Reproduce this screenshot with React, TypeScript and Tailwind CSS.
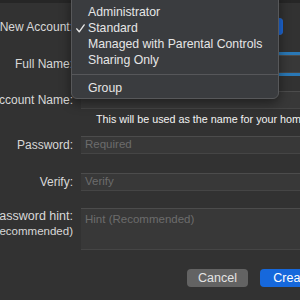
import React from 'react'

const font = { fontFamily: '"Liberation Sans", Arial, sans-serif' }

function Label({ children }: { children: React.ReactNode }) {
  return (
    <div className="flex w-[73px] flex-none justify-end whitespace-nowrap text-[12px] text-[#d8d8d8]">
      {children}
    </div>
  )
}

function Field({ placeholder, focused }: { placeholder?: string; focused?: boolean }) {
  return (
    <div
      className={
        'ml-[8px] flex h-[18px] w-[260px] flex-none items-center border-t border-[#4c4c4c] border-b-[#454545] border-b bg-[#383838] pl-[4px] text-[#6c6c6c] ' +
        (focused ? 'shadow-[0_0_0_3px_#2a78b6]' : '')
      }
    >
      {placeholder}
    </div>
  )
}

function Menu() {
  const items = ['Administrator', 'Standard', 'Managed with Parental Controls', 'Sharing Only']
  return (
    <div className="absolute left-[71px] top-[-8px] w-[208px] rounded-[6px] border border-[#57585a] bg-[#3a3c3f] pb-[2px] pt-[11px] text-[12.25px] text-[#e6e6e6] shadow-[0_4px_12px_rgba(0,0,0,0.45)]">
      {items.map((t) => (
        <div key={t} className="flex h-[16px] items-center">
          <span className="flex w-[16px] flex-none justify-end pr-[1px]">
            {t === 'Standard' && (
              <svg width="9" height="9" viewBox="0 0 9 9" className="mr-[2px]">
                <path d="M0.8 4.9 L3.2 7.8 L8.2 0.9" fill="none" stroke="#e6e6e6" strokeWidth="1.4" strokeLinecap="round" strokeLinejoin="round" />
              </svg>
            )}
          </span>
          <span className="whitespace-nowrap">{t}</span>
        </div>
      ))}
      <div className="flex h-[12px] items-center">
        <div className="h-px w-full bg-[#56575a]" />
      </div>
      <div className="flex h-[16px] items-center pl-[16px]">Group</div>
    </div>
  )
}

export default function App() {
  return (
    <div className="relative h-[300px] w-[300px] overflow-hidden bg-[#323232] text-[11.5px]" style={font}>
      <div className="h-[3px] bg-[#262626]" />
      <div className="flex flex-col">
        <div className="mt-[15px] flex h-[17px] items-center">
          <Label>New Account:</Label>
          <div className="ml-[8px] flex h-[17px] w-[202px] flex-none justify-end rounded-[4px] bg-[#5b5b5b]">
            <div className="w-[17px] rounded-[4px] bg-[#1d67d6]" />
          </div>
        </div>
        <div className="mt-[20px] flex h-[18px] items-center">
          <Label>Full Name:</Label>
          <Field focused />
        </div>
        <div className="mt-[18px] flex h-[18px] items-center">
          <Label>Account Name:</Label>
          <Field />
        </div>
        <div className="mt-[3px] flex h-[14px] items-center whitespace-nowrap pl-[96px] text-[10.75px] text-[#f2f2f2]">
          This will be used as the name for your home folder.
        </div>
        <div className="mt-[10px] flex h-[18px] items-center">
          <Label>Password:</Label>
          <Field placeholder="Required" />
        </div>
        <div className="mt-[19px] flex h-[18px] items-center">
          <Label>Verify:</Label>
          <Field placeholder="Verify" />
        </div>
        <div className="mt-[17px] flex items-start">
          <div className="flex w-[73px] flex-none flex-col items-end whitespace-nowrap pt-[1px] text-[#d8d8d8]">
            <div className="h-[15px] text-[12.5px] leading-[15px]">Password hint:</div>
            <div className="text-[11.5px] leading-[15px]">(Recommended)</div>
          </div>
          <div className="ml-[8px] h-[42px] w-[260px] flex-none border-b border-t border-b-[#454545] border-t-[#4c4c4c] bg-[#383838] pl-[4px] pt-[2px] text-[#6c6c6c]">
            Hint (Recommended)
          </div>
        </div>
        <div className="mt-[19px] flex h-[18px] text-[12.5px]">
          <div className="ml-[187px] flex w-[61px] flex-none items-center justify-center rounded-[4px] bg-[#636363] text-[#e4e4e4]">
            Cancel
          </div>
          <div className="ml-[12px] flex w-[64px] flex-none items-center justify-center rounded-[4px] bg-[#1668dc] text-white">
            Create
          </div>
        </div>
      </div>
      <Menu />
    </div>
  )
}
